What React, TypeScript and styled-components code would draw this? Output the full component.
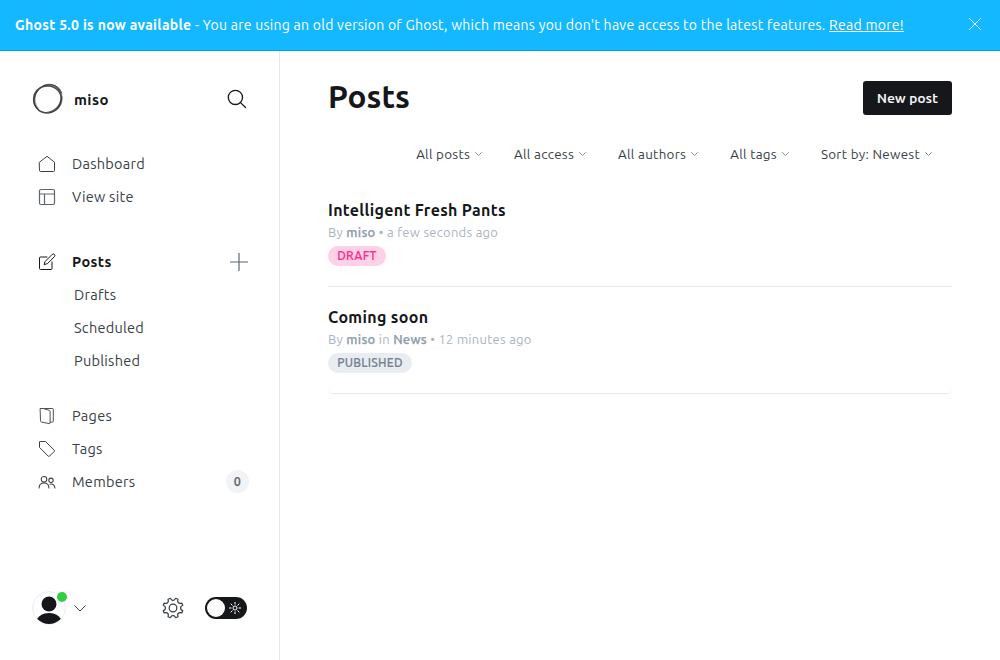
import React from "react";
import styled, { createGlobalStyle } from "styled-components";

const GlobalStyle = createGlobalStyle`
  * { box-sizing: border-box; }
  html, body { margin: 0; padding: 0; }
  body {
    font-family: Ubuntu, "Noto Sans", sans-serif;
    color: #15171a;
    background: #fff;
    overflow: hidden;
  }
  svg { display: block; flex: none; }
`;

const Screen = styled.div`
  display: flex;
  flex-direction: column;
  width: 1000px;
  height: 660px;
`;

const Banner = styled.div`
  display: flex;
  align-items: center;
  justify-content: space-between;
  height: 51px;
  padding: 0 19px 2px 15px;
  background: #14b8ff;
  border-bottom: 1px solid #00a2e8;
  color: #fff;
  white-space: nowrap;
`;

const BannerText = styled.div`
  padding-top: 2px;
  font-size: 14px;
  line-height: 20px;
  letter-spacing: 0.268px;
`;

const Strong = styled.b`
  font-weight: 700;
  letter-spacing: 0.31px;
`;

const BannerLink = styled.a`
  color: #fff;
  text-decoration: underline;
  text-decoration-thickness: 1px;
  text-underline-offset: 1px;
`;

const Body = styled.div`
  display: flex;
  flex: 1;
`;

const Sidebar = styled.nav`
  display: flex;
  flex-direction: column;
  width: 280px;
  padding: 32px 31px 0 32px;
  border-right: 1px solid #e5e7ea;
`;

const Brand = styled.div`
  display: flex;
  align-items: center;
  height: 32px;
  margin-bottom: 32px;
  padding-right: 1px;
`;

const BrandName = styled.div`
  flex: 1;
  margin-left: 10px;
  padding-top: 1px;
  font-size: 15px;
  font-weight: 700;
  line-height: 20px;
  letter-spacing: 0.4px;
`;

const NavGroup = styled.div<{ $gap: number }>`
  margin-bottom: ${(p) => p.$gap}px;
`;

const NavItem = styled.div<{ $active?: boolean }>`
  display: flex;
  align-items: center;
  height: 33px;
  padding-left: 6px;
  color: ${(p) => (p.$active ? "#15171a" : "#394047")};
  font-size: 14.5px;
  font-weight: ${(p) => (p.$active ? 700 : 400)};
  letter-spacing: ${(p) => (p.$active ? 0.4 : 0.27)}px;
`;

const NavLabel = styled.span`
  flex: 1;
  margin-left: 16px;
`;

const SubItem = styled.div`
  display: flex;
  align-items: center;
  height: 33px;
  padding-left: 42px;
  color: #394047;
  font-size: 14.5px;
  letter-spacing: 0.27px;
`;

const Count = styled.span`
  width: 23px;
  height: 23px;
  margin-right: -1px;
  border-radius: 50%;
  background: #f1f3f4;
  color: #5d6670;
  font-size: 12.5px;
  font-weight: 500;
  -webkit-text-stroke: 0.25px currentColor;
  line-height: 23px;
  text-align: center;
`;

const Footer = styled.div`
  display: flex;
  align-items: center;
  height: 34px;
  margin-top: auto;
  margin-bottom: 35px;
`;

const Spacer = styled.div<{ $width?: number }>`
  flex: ${(p) => (p.$width ? `0 0 ${p.$width}px` : "1")};
`;

const Toggle = styled.div`
  display: flex;
  align-items: center;
  justify-content: space-between;
  width: 42px;
  height: 22px;
  margin: 0 1px 0 21px;
  padding: 0 5px 0 2px;
  border-radius: 11px;
  background: #15171a;
`;

const Knob = styled.div`
  width: 18px;
  height: 18px;
  border-radius: 50%;
  background: #fff;
`;

const Main = styled.main`
  flex: 1;
  padding: 30px 48px 0;
`;

const Header = styled.header`
  display: flex;
  align-items: center;
  justify-content: space-between;
  height: 34px;
`;

const Title = styled.h1`
  margin: -3px 0 0;
  font-size: 31.5px;
  font-weight: 700;
  line-height: 36px;
  letter-spacing: 0.05px;
`;

const PrimaryButton = styled.button`
  width: 89px;
  height: 34px;
  padding: 0;
  border: 0;
  border-radius: 3px;
  background: #15171a;
  color: #fff;
  font-family: inherit;
  font-size: 13.5px;
  font-weight: 500;
  letter-spacing: 0.28px;
  -webkit-text-stroke: 0.2px currentColor;
`;

const Filters = styled.div`
  display: flex;
  justify-content: flex-end;
  gap: 32px;
  height: 20px;
  margin: 29px 20px 0 0;
`;

const Filter = styled.div`
  display: flex;
  align-items: center;
  gap: 5px;
  color: #394047;
  font-size: 13.4px;
  letter-spacing: 0.29px;
  white-space: nowrap;
`;

const PostList = styled.div`
  margin-top: 16px;
`;

const Post = styled.article<{ $last?: boolean }>`
  height: 107px;
  padding-top: 19px;
  border-bottom: 1px solid #e8ebef;
  border-radius: ${(p) => (p.$last ? "5px" : "0")};
`;

const PostTitle = styled.h3`
  margin: 0;
  font-size: 16px;
  font-weight: 700;
  line-height: 22px;
  letter-spacing: 0.33px;
`;

const Meta = styled.p`
  margin: 2px 0 0;
  color: #abb4be;
  font-size: 13px;
  line-height: 18px;
  letter-spacing: 0.27px;

  b {
    color: #8e9cac;
    font-weight: 500;
    -webkit-text-stroke: 0.25px currentColor;
  }
`;

const Badge = styled.span<{ $draft?: boolean; $width: number }>`
  display: block;
  width: ${(p) => p.$width}px;
  height: 20px;
  margin-top: 5px;
  border-radius: 10px;
  background: ${(p) => (p.$draft ? "#ffd1e6" : "#e9edf1")};
  color: ${(p) => (p.$draft ? "#fb2d8d" : "#738290")};
  font-size: 12px;
  font-weight: 500;
  line-height: 20px;
  letter-spacing: 0.22px;
  text-align: center;
  -webkit-text-stroke: 0.15px currentColor;
`;

const line = { fill: "none", stroke: "currentColor", strokeLinecap: "round", strokeLinejoin: "round" } as const;

const Logo = () => (
  <svg width="32" height="32" viewBox="0 0 32 32" fill="none" stroke="#333">
    <path d="M11 2.800C19-.8 27.500 2.500 30 9.500L28 11C25 4.500 18 2.500 11 4.500Z" fill="#777" stroke="none" opacity=".75" />
    <path d="M30.300 13C32 21 26.500 29 17 30.500L17 28.500C24.500 26.500 28.500 20 28.600 13Z" fill="#777" stroke="none" opacity=".75" />
    <path d="M5 6C-.5 12-.5 21.500 5.500 27L7 25.500C2.500 20 2.500 13 6.500 7.500Z" fill="#777" stroke="none" opacity=".6" />
    <ellipse cx="15.400" cy="16.300" rx="13.900" ry="13.500" strokeWidth="1.200" opacity=".8" />
    <ellipse cx="16.200" cy="15.700" rx="15" ry="12.900" strokeWidth=".9" opacity=".7" transform="rotate(-42 16 16)" />
    <ellipse cx="15.700" cy="15.900" rx="13" ry="14.800" strokeWidth=".9" opacity=".7" transform="rotate(24 16 16)" />
  </svg>
);
const SearchIcon = () => (
  <svg width="20" height="20" viewBox="0 0 20 20" {...line} stroke="#15171a" strokeWidth="1.3">
    <circle cx="8.4" cy="8.4" r="7.1" /><path d="M13.600 13.600 18.500 18.500" />
  </svg>
);
const HomeIcon = () => (
  <svg width="18" height="18" viewBox="0 0 18 18" {...line}>
    <path d="M1.5 7.2 9 1.3l7.500 5.900v8.300a1 1 0 0 1-1 1h-13a1 1 0 0 1-1-1Z" />
  </svg>
);
const SiteIcon = () => (
  <svg width="18" height="18" viewBox="0 0 18 18" {...line} strokeWidth="1.200" opacity=".8">
    <rect x="1.500" y="1.500" width="15" height="15" rx="1.500" /><path d="M1.500 6h15M6.500 6v10.500" />
  </svg>
);
const EditIcon = () => (
  <svg width="18" height="18" viewBox="0 0 18 18" {...line}>
    <path d="M9 4H2.500a1 1 0 0 0-1 1v10.500a1 1 0 0 0 1 1H13a1 1 0 0 0 1-1V9" />
    <path d="m7.200 8.400 6.900-6.900a1.500 1.500 0 0 1 2.300 2.200l-6.900 6.900-3 .9Z" />
  </svg>
);
const PlusIcon = () => (
  <svg width="18" height="18" viewBox="0 0 18 18" stroke="#5d6670" strokeWidth="1.200">
    <path d="M9 0v18M0 9h18" />
  </svg>
);
const PagesIcon = () => (
  <svg width="18" height="18" viewBox="0 0 18 18" {...line} opacity=".9">
    <path d="M2.500 1.500h3l6 2a1 1 0 0 1 .6 1V16c0 .6-.4.8-.9.600L3.200 15a1 1 0 0 1-.7-1Z" />
    <path d="M3 1.500h11.500a.8.8 0 0 1 .8.8v12a.8.8 0 0 1-.8.800h-2.200" />
  </svg>
);
const TagIcon = () => (
  <svg width="18" height="18" viewBox="0 0 18 18" {...line}>
    <path d="M1.500 2.200v5.200l8.700 8.700a1 1 0 0 0 1.400 0l4.600-4.600a1 1 0 0 0 0-1.400L7.500 1.500H2.200a.7.7 0 0 0-.7.700Z" />
  </svg>
);
const MembersIcon = () => (
  <svg width="18" height="18" viewBox="0 0 18 18" {...line} strokeWidth="1.050">
    <circle cx="6" cy="6.300" r="2.800" /><path d="M1.100 15c0-3 2-5 4.900-5s4.900 2 4.900 5" />
    <circle cx="13" cy="7.300" r="2.200" /><path d="M12 11.200c3-.7 4.900 1 4.900 3.800" />
  </svg>
);
const CloseIcon = () => (
  <svg width="12" height="12" viewBox="0 0 12 12" stroke="#fff" strokeWidth=".9"><path d="m0 0 12 12M12 0 0 12" /></svg>
);
const Chevron = ({ size = 7, color = "#7c8b9a" }: { size?: number; color?: string }) => (
  <svg width={size} height={(size * 7) / 12} viewBox="0 0 12 7" fill="none" stroke={color} strokeWidth={12 / size} overflow="visible">
    <path d="m.5.500 5.500 5.500L11.500.500" />
  </svg>
);
const Avatar = () => (
  <svg width="36" height="34" viewBox="0 0 36 34">
    <defs><clipPath id="face"><circle cx="17" cy="17" r="16" /></clipPath></defs>
    <circle cx="17" cy="17" r="16.400" fill="#fff" stroke="#e7eaed" strokeWidth=".9" />
    <g clipPath="url(#face)" fill="#15171a"><circle cx="17" cy="13" r="7.500" /><ellipse cx="17" cy="33" rx="13.500" ry="11" /></g>
    <circle cx="30" cy="6" r="5" fill="#30cf43" />
  </svg>
);
const teeth = Array.from({ length: 8 }, (_, i) => {
  const at = (r: number, deg: number) => {
    const a = ((i * 45 + 22.5 + deg) * Math.PI) / 180;
    return `${(11 + r * Math.cos(a)).toFixed(2)} ${(11 + r * Math.sin(a)).toFixed(2)}`;
  };
  return `${i ? "L" : "M"}${at(10.100, -7)}L${at(10.100, 7)}Q${at(7.200, 13)} ${at(7.700, 22.500)}Q${at(7.200, 32)} ${at(10.100, 38)}`;
}).join("");
const GearIcon = () => (
  <svg width="22" height="22" viewBox="0 0 22 22" {...line} stroke="#394047" strokeWidth="1.250">
    <path d={`${teeth}Z`} /><circle cx="11" cy="11" r="3.800" />
  </svg>
);
const SunIcon = () => (
  <svg width="14" height="14" viewBox="0 0 14 14" fill="none" stroke="#fff">
    <circle cx="7" cy="7" r="2" />
    <path d="M7 1v2.500M7 10.500V13M1 7h2.500M10.500 7H13M2.700 2.700l1.800 1.800M9.500 9.500l1.800 1.800M11.300 2.700 9.500 4.500M4.500 9.500l-1.800 1.800" />
  </svg>
);

const filters = ["All posts", "All access", "All authors", "All tags", "Sort by: Newest"];

export default function App() {
  return (
    <Screen>
      <GlobalStyle />
      <Banner>
        <BannerText>
          <Strong>Ghost 5.0 is now available</Strong> - You are using an old version of Ghost, which means you don't have
          access to the latest features. <BannerLink>Read more!</BannerLink>
        </BannerText>
        <CloseIcon />
      </Banner>
      <Body>
        <Sidebar>
          <Brand><Logo /><BrandName>miso</BrandName><SearchIcon /></Brand>
          <NavGroup $gap={32}>
            <NavItem><HomeIcon /><NavLabel>Dashboard</NavLabel></NavItem>
            <NavItem><SiteIcon /><NavLabel>View site</NavLabel></NavItem>
          </NavGroup>
          <NavGroup $gap={22}>
            <NavItem $active><EditIcon /><NavLabel>Posts</NavLabel><PlusIcon /></NavItem>
            <SubItem>Drafts</SubItem>
            <SubItem>Scheduled</SubItem>
            <SubItem>Published</SubItem>
          </NavGroup>
          <NavGroup $gap={0}>
            <NavItem><PagesIcon /><NavLabel>Pages</NavLabel></NavItem>
            <NavItem><TagIcon /><NavLabel>Tags</NavLabel></NavItem>
            <NavItem><MembersIcon /><NavLabel>Members</NavLabel><Count>0</Count></NavItem>
          </NavGroup>
          <Footer>
            <Avatar /><Spacer $width={6} /><Chevron size={12} color="#394047" />
            <Spacer /><GearIcon />
            <Toggle><Knob /><SunIcon /></Toggle>
          </Footer>
        </Sidebar>
        <Main>
          <Header><Title>Posts</Title><PrimaryButton>New post</PrimaryButton></Header>
          <Filters>
            {filters.map((label) => <Filter key={label}>{label}<Chevron /></Filter>)}
          </Filters>
          <PostList>
            <Post>
              <PostTitle>Intelligent Fresh Pants</PostTitle>
              <Meta>By <b>miso</b> • a few seconds ago</Meta>
              <Badge $draft $width={58}>DRAFT</Badge>
            </Post>
            <Post $last>
              <PostTitle>Coming soon</PostTitle>
              <Meta>By <b>miso</b> in <b>News</b> • 12 minutes ago</Meta>
              <Badge $width={84}>PUBLISHED</Badge>
            </Post>
          </PostList>
        </Main>
      </Body>
    </Screen>
  );
}
